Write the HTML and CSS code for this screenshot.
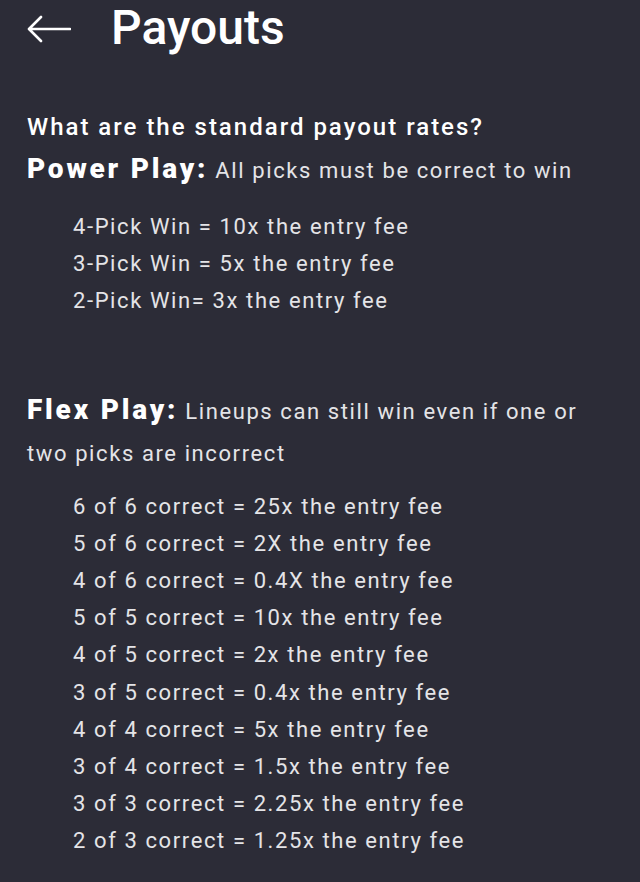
FILE: index.html
```html
<!DOCTYPE html>
<html lang="en">
<head>
<meta charset="utf-8">
<title>Payouts</title>
<link rel="stylesheet" href="styles.css">
</head>
<body>
<div class="page">
  <header class="header">
    <svg class="back" width="44" height="28" viewBox="0 0 44 28" aria-hidden="true">
      <path d="M43 14 H3 M14 2 L2 14 L14 26" fill="none" stroke="#ffffff" stroke-width="2.6" stroke-linecap="round" stroke-linejoin="round"/>
    </svg>
    <h1 class="title">Payouts</h1>
  </header>

  <h2 class="question">What are the standard payout rates?</h2>
  <p class="play"><span class="play-name">Power Play:</span> All picks must be correct to win</p>
  <ul class="rates">
    <li>4-Pick Win = 10x the entry fee</li>
    <li>3-Pick Win = 5x the entry fee</li>
    <li>2-Pick Win= 3x the entry fee</li>
  </ul>

  <p class="play play-flex"><span class="play-name">Flex Play:</span> Lineups can still win even if one or two picks are incorrect</p>
  <ul class="rates rates-flex">
    <li>6 of 6 correct = 25x the entry fee</li>
    <li>5 of 6 correct = 2X the entry fee</li>
    <li>4 of 6 correct = 0.4X the entry fee</li>
    <li>5 of 5 correct = 10x the entry fee</li>
    <li>4 of 5 correct = 2x the entry fee</li>
    <li>3 of 5 correct = 0.4x the entry fee</li>
    <li>4 of 4 correct = 5x the entry fee</li>
    <li>3 of 4 correct = 1.5x the entry fee</li>
    <li>3 of 3 correct = 2.25x the entry fee</li>
    <li>2 of 3 correct = 1.25x the entry fee</li>
  </ul>
</div>
</body>
</html>
```
FILE: styles.css
```css
html, body {
  margin: 0;
  padding: 0;
  background: #2c2c37;
}
body {
  font-family: Roboto, "Liberation Sans", sans-serif;
  color: #e4e4e7;
  height: 882px;
  overflow: hidden;
}
.page {
  padding: 0 40px 0 27px;
}
.header {
  display: flex;
  align-items: center;
  gap: 40px;
  height: 56px;
}
.back {
  display: block;
  flex: none;
  margin-top: 2px;
}
.title {
  margin: 0;
  font-size: 48px;
  line-height: 56px;
  font-weight: 500;
  color: #ffffff;
}
.question {
  margin: 56px 0 0;
  font-size: 24px;
  line-height: 30px;
  font-weight: 500;
  color: #ffffff;
  letter-spacing: 2px;
}
.play {
  margin: 8px 0 0;
  font-size: 22px;
  line-height: 42px;
  letter-spacing: 1.6px;
  color: #e4e4e7;
}
.play-name {
  font-size: 28px;
  line-height: 1;
  font-weight: 900;
  letter-spacing: 2.8px;
  color: #ffffff;
}
.rates {
  list-style: none;
  margin: 16px 0 0;
  padding: 0 0 0 46px;
  font-size: 22px;
  line-height: 37.2px;
  letter-spacing: 1.6px;
}
.play-flex {
  margin-top: 71px;
}
.rates-flex {
  margin-top: 13px;
}
```
